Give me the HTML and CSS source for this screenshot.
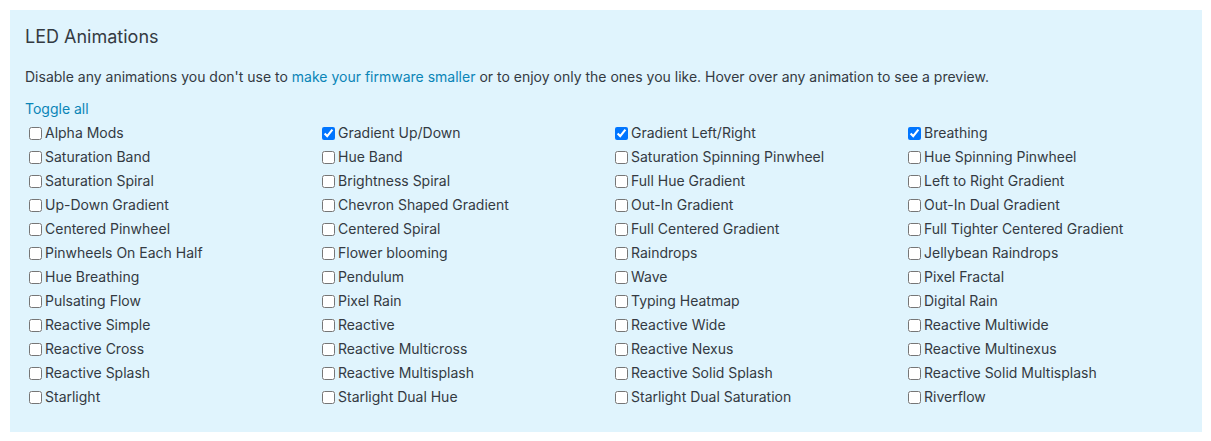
FILE: index.html
```html
<!DOCTYPE html>
<html lang="en">
<head>
    <meta charset="UTF-8">
    <meta name="viewport" content="width=device-width, initial-scale=1.0">
    <title>LED Animations</title>
    <link rel="stylesheet" href="styles.css">
</head>
<body>
    <div class="panel">
        <h2>LED Animations</h2>
        <p class="desc">Disable any animations you don't use to <a href="#">make your firmware smaller</a> or to enjoy only the ones you like. Hover over any animation to see a preview.</p>
        <a href="#" class="toggle-all">Toggle all</a>
        <div class="anim-grid">
            <label><input type="checkbox">Alpha Mods</label>
            <label><input type="checkbox" checked>Gradient Up/Down</label>
            <label><input type="checkbox" checked>Gradient Left/Right</label>
            <label><input type="checkbox" checked>Breathing</label>

            <label><input type="checkbox">Saturation Band</label>
            <label><input type="checkbox">Hue Band</label>
            <label><input type="checkbox">Saturation Spinning Pinwheel</label>
            <label><input type="checkbox">Hue Spinning Pinwheel</label>

            <label><input type="checkbox">Saturation Spiral</label>
            <label><input type="checkbox">Brightness Spiral</label>
            <label><input type="checkbox">Full Hue Gradient</label>
            <label><input type="checkbox">Left to Right Gradient</label>

            <label><input type="checkbox">Up-Down Gradient</label>
            <label><input type="checkbox">Chevron Shaped Gradient</label>
            <label><input type="checkbox">Out-In Gradient</label>
            <label><input type="checkbox">Out-In Dual Gradient</label>

            <label><input type="checkbox">Centered Pinwheel</label>
            <label><input type="checkbox">Centered Spiral</label>
            <label><input type="checkbox">Full Centered Gradient</label>
            <label><input type="checkbox">Full Tighter Centered Gradient</label>

            <label><input type="checkbox">Pinwheels On Each Half</label>
            <label><input type="checkbox">Flower blooming</label>
            <label><input type="checkbox">Raindrops</label>
            <label><input type="checkbox">Jellybean Raindrops</label>

            <label><input type="checkbox">Hue Breathing</label>
            <label><input type="checkbox">Pendulum</label>
            <label><input type="checkbox">Wave</label>
            <label><input type="checkbox">Pixel Fractal</label>

            <label><input type="checkbox">Pulsating Flow</label>
            <label><input type="checkbox">Pixel Rain</label>
            <label><input type="checkbox">Typing Heatmap</label>
            <label><input type="checkbox">Digital Rain</label>

            <label><input type="checkbox">Reactive Simple</label>
            <label><input type="checkbox">Reactive</label>
            <label><input type="checkbox">Reactive Wide</label>
            <label><input type="checkbox">Reactive Multiwide</label>

            <label><input type="checkbox">Reactive Cross</label>
            <label><input type="checkbox">Reactive Multicross</label>
            <label><input type="checkbox">Reactive Nexus</label>
            <label><input type="checkbox">Reactive Multinexus</label>

            <label><input type="checkbox">Reactive Splash</label>
            <label><input type="checkbox">Reactive Multisplash</label>
            <label><input type="checkbox">Reactive Solid Splash</label>
            <label><input type="checkbox">Reactive Solid Multisplash</label>

            <label><input type="checkbox">Starlight</label>
            <label><input type="checkbox">Starlight Dual Hue</label>
            <label><input type="checkbox">Starlight Dual Saturation</label>
            <label><input type="checkbox">Riverflow</label>
        </div>
    </div>
</body>
</html>
```

FILE: styles.css
```css
body {
    font-family: Inter, "Noto Sans", sans-serif;
    font-size: 14px;
    line-height: 24px;
    color: #343a42;
    margin: 10px 9px 10px 10px;
    background-color: white;
}
.panel {
    background-color: #e0f4fd;
    padding: 13px 5px 23px 15px;
}
h2 {
    font-size: 18px;
    font-weight: 400;
    line-height: 27px;
    margin: 0 0 15px 0;
}
a {
    color: #0a85b7;
    text-decoration: none;
}
.desc {
    margin: 0 0 8px 0;
}
.toggle-all {
    display: block;
}
.anim-grid {
    display: grid;
    grid-template-columns: repeat(4, 1fr);
}
.anim-grid label {
    display: flex;
    align-items: center;
    height: 24px;
    white-space: nowrap;
}
.anim-grid input {
    margin: 0 3px 0 4px;
}
```
